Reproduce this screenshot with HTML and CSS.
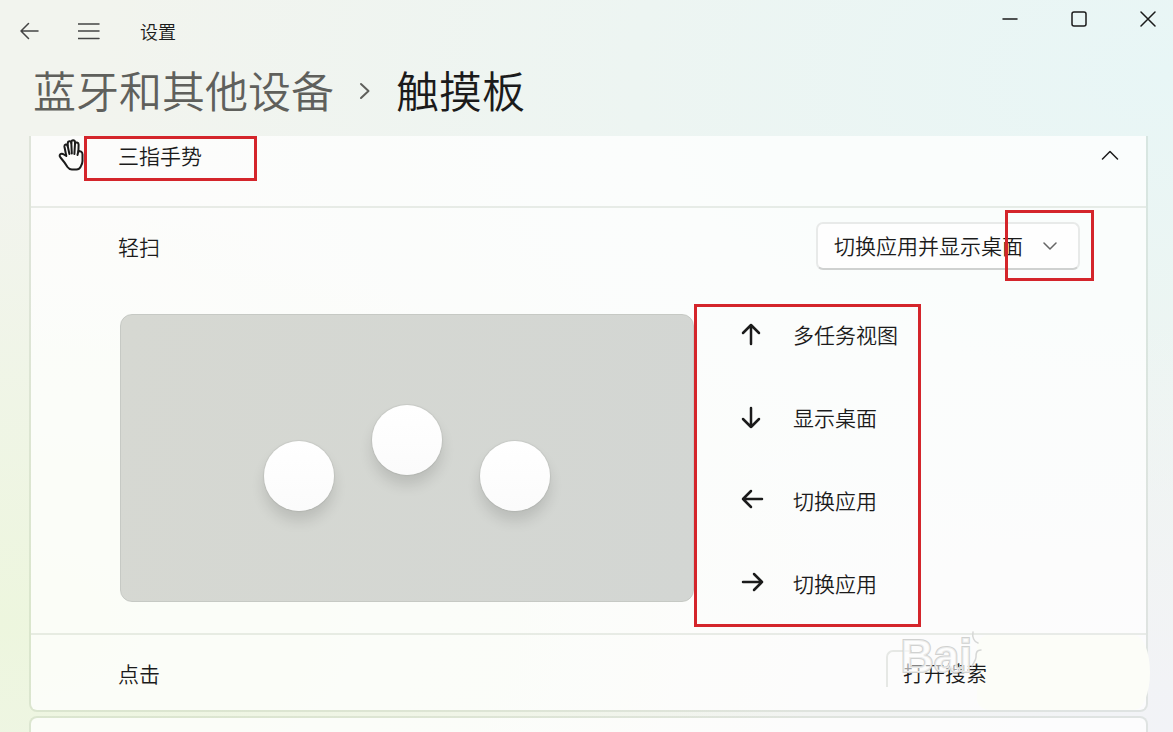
FILE: index.html
```html
<!DOCTYPE html>
<html lang="zh-CN">
  <head>
    <meta charset="UTF-8">
    <meta name="viewport" content="width=device-width, initial-scale=1.0">
    <title>设置</title>
    <link rel="stylesheet" href="styles.css">
  </head>
  <body>
    <header class="titlebar">
      <button class="nav-btn" type="button" aria-label="返回">
        <svg width="20" height="18" viewBox="0 0 20 18"><path d="M18 9H1M8.500 1.500L1 9L8.500 16.500"/></svg>
      </button>
      <button class="nav-btn" type="button" aria-label="菜单">
        <svg width="22" height="18" viewBox="0 0 22 18"><path d="M0 2H21M0 9H21M0 16.500H21"/></svg>
      </button>
      <span class="app-name">设置</span>
      <div class="window-controls">
        <button type="button" aria-label="最小化">
          <svg width="16" height="16" viewBox="0 0 16 16"><path d="M1 8H15"/></svg>
        </button>
        <button type="button" aria-label="最大化">
          <svg width="16" height="16" viewBox="0 0 16 16"><rect x="1" y="1" width="14" height="14" rx="2"/></svg>
        </button>
        <button type="button" aria-label="关闭">
          <svg width="16" height="16" viewBox="0 0 16 16"><path d="M1 1L15 15M15 1L1 15"/></svg>
        </button>
      </div>
    </header>

    <nav class="breadcrumb">
      <a href="#">蓝牙和其他设备</a>
      <svg width="12" height="18" viewBox="0 0 12 18"><path d="M2 2L9.500 9L2 16"/></svg>
      <h1>触摸板</h1>
    </nav>

    <main class="content">
      <section class="card card-open">
        <div class="card-header">
          <svg class="hand" width="27" height="32" viewBox="0 0 27 32">
            <path d="M8.300 17L6.500 8C6 5 9 4.500 9.600 7L9.800 4.500C9.500 1.800 13 1.300 13.300 4V3.300C13.500 0.700 16.800 0.700 17 3.300V5C17.500 2.500 20.800 3 20.600 6L20.400 12.500C22.800 11.500 24.500 13 24.500 15.500V22C24.500 24.500 23.500 26 22.500 28C21.500 30 20.500 30.500 18.500 30.500H14C11.500 30.500 10.500 29.500 9.500 28C8 25.500 5.500 22 2.500 18.500C0.500 16 2.800 14 5 15Z"/>
            <path d="M9.600 6.500L11.400 15M13.300 4L13.800 14.500M17 5L16.400 15M20.400 12L19.500 16"/>
          </svg>
          <span class="card-title">三指手势</span>
          <button class="expander" type="button" aria-label="收起">
            <svg width="18" height="10" viewBox="0 0 18 10"><path d="M1.500 9L9 1.500L16.500 9"/></svg>
          </button>
          <div class="mark mark-title"></div>
        </div>

        <div class="card-body">
          <div class="setting-row">
            <label for="swipe">轻扫</label>
            <div class="select-box">
              <select id="swipe">
                <option>切换应用并显示桌面</option>
              </select>
              <svg width="14" height="8" viewBox="0 0 14 8"><path d="M1 1L7 7L13 1"/></svg>
              <div class="mark mark-select"></div>
            </div>
          </div>

          <div class="gesture">
            <div class="touchpad">
              <div class="fingers">
                <span class="finger"></span>
                <span class="finger finger-mid"></span>
                <span class="finger"></span>
              </div>
            </div>
            <ul class="actions">
              <li>
                <svg width="24" height="24" viewBox="0 0 24 24"><path d="M11 22V3M3 11L11 3L19 11"/></svg>
                <span>多任务视图</span>
              </li>
              <li>
                <svg width="24" height="24" viewBox="0 0 24 24"><path d="M11 3V22M3 14L11 22L19 14"/></svg>
                <span>显示桌面</span>
              </li>
              <li>
                <svg width="24" height="24" viewBox="0 0 24 24"><path d="M22 11H3M11 3L3 11L11 19"/></svg>
                <span>切换应用</span>
              </li>
              <li>
                <svg width="24" height="24" viewBox="0 0 24 24"><path d="M3 11H22M14 3L22 11L14 19"/></svg>
                <span>切换应用</span>
              </li>
            </ul>
          </div>
        </div>

        <div class="tap-row">
          <label for="tap">点击</label>
          <div class="smudge"></div>
          <button class="tap-value" id="tap" type="button">打开搜索</button>
          <span class="watermark">Bai</span>
          <svg class="paw" width="12" height="42" viewBox="0 0 12 42"><path d="M2 1C1 6 3 11 7 12M10 19C5 19 5 23 5 26C5 30 2 32 1 35"/></svg>
        </div>
      </section>
      <section class="card card-next"></section>
    </main>
  </body>
</html>
```

FILE: styles.css
```css
* {
    box-sizing: border-box;
}

html, body {
    height: 100%;
    margin: 0;
}

body {
    display: flex;
    flex-direction: column;
    overflow: hidden;
    font-family: "Noto Sans CJK SC", sans-serif;
    font-size: 21px;
    font-weight: 350;
    line-height: 30px;
    color: #1b1b1b;
    background:
      radial-gradient(ellipse at 0% 85%, #edf6de 0%, rgba(237, 246, 222, 0) 50%),
      radial-gradient(ellipse at 100% 100%, #f2f3f7 0%, rgba(242, 243, 247, 0) 40%),
      radial-gradient(ellipse at 100% 10%, #e8f6f6 0%, rgba(232, 246, 246, 0) 65%),
      #f2f4ee;
}

button {
    padding: 0;
    border: none;
    background: none;
    font: inherit;
    color: inherit;
}

svg {
    display: block;
    flex: none;
    fill: none;
    stroke: #1b1b1b;
    stroke-width: 1.500;
    stroke-linecap: round;
    stroke-linejoin: round;
}

/* 标题栏 */
.titlebar {
    display: flex;
    align-items: center;
    height: 62px;
    flex: none;
}

.nav-btn {
    display: flex;
    align-items: center;
    justify-content: center;
    width: 59px;
    height: 40px;
}

.nav-btn svg {
    stroke: #444;
}

.app-name {
    margin-left: 22px;
    font-size: 18px;
}

.window-controls {
    display: flex;
    align-self: flex-start;
    gap: 19px;
    margin-left: auto;
}

.window-controls button {
    display: flex;
    align-items: center;
    justify-content: center;
    width: 50px;
    height: 37px;
}

/* 面包屑 */
.breadcrumb {
    display: flex;
    align-items: center;
    flex: none;
    height: 74px;
    padding: 0 33px 16px;
    font-size: 43px;
    line-height: 58px;
}

.breadcrumb a {
    padding-bottom: 4px;
    color: #5f605c;
    text-decoration: none;
}

.breadcrumb svg {
    margin: 0 25px;
    stroke: #5f605c;
    stroke-width: 2;
}

.breadcrumb h1 {
    margin: 0;
    padding-bottom: 4px;
    font-size: inherit;
    font-weight: inherit;
}

/* 卡片 */
.content {
    flex: 1;
    min-height: 0;
    padding: 0 25px 0 29px;
    overflow: hidden;
}

.card {
    border: 2px solid rgba(60, 90, 50, 0.1);
    border-radius: 8px;
    background: rgba(255, 255, 255, 0.75);
    background-clip: padding-box;
}

.card-open {
    border-top: none;
    border-top-left-radius: 0;
    border-top-right-radius: 0;
}

.card-next {
    height: 60px;
    margin-top: 4px;
}

.card-header {
    position: relative;
    display: flex;
    align-items: center;
    height: 72px;
    padding: 0 27px 32px;
    border-bottom: 2px solid rgba(60, 90, 50, 0.1);
}

.hand {
    stroke-width: 2;
}

.card-title {
    margin-left: 33px;
}

.expander {
    display: flex;
    align-items: center;
    justify-content: center;
    width: 18px;
    height: 30px;
    margin-left: auto;
}

.card-body {
    padding: 14px 66px 6px 87px;
    border-bottom: 2px solid rgba(60, 90, 50, 0.1);
}

.setting-row {
    display: flex;
    align-items: center;
    justify-content: space-between;
}

.select-box {
    position: relative;
}

.select-box select {
    appearance: none;
    display: block;
    width: 264px;
    height: 48px;
    padding: 0 50px 2px 16px;
    border: 2px solid #e8eae9;
    border-bottom-color: #cfd1d0;
    border-radius: 7px;
    background: #fefefe;
    font: inherit;
    color: inherit;
}

.select-box svg {
    position: absolute;
    top: 20px;
    right: 23px;
    stroke: #666;
    pointer-events: none;
}

/* 红色标注框 */
.mark {
    position: absolute;
    border: 3px solid #d4252b;
    pointer-events: none;
}

.mark-title {
    top: 0;
    left: 53px;
    width: 173px;
    height: 45px;
}

.mark-select {
    top: -12px;
    right: -14px;
    width: 89px;
    height: 71px;
}

/* 手势示意 */
.gesture {
    display: flex;
    align-items: flex-start;
    margin-top: 34px;
}

.touchpad {
    display: flex;
    align-items: center;
    justify-content: center;
    flex: 0 1 574px;
    height: 288px;
    margin: 10px 0 0 2px;
    border: 1px solid #c6c9c4;
    border-radius: 12px;
    background: linear-gradient(100deg, #d6d8d2, #d3d6d3);
}

.fingers {
    display: flex;
    align-items: flex-end;
    gap: 38px;
    height: 106px;
}

.finger {
    width: 70px;
    height: 70px;
    border-radius: 50%;
    background: linear-gradient(#fff, #fbfbfb);
    box-shadow: 0 0 1px 1px rgba(0, 0, 0, 0.06), 0 10px 14px rgba(0, 0, 0, 0.12);
}

.finger-mid {
    align-self: flex-start;
}

.actions {
    display: flex;
    flex-direction: column;
    gap: 53px;
    width: 227px;
    flex: none;
    margin: 0;
    padding: 12px 0 26px 43px;
    border: 3px solid #d4252b;
    list-style: none;
}

.actions li {
    display: flex;
    align-items: center;
    gap: 29px;
}

.actions svg {
    stroke-width: 2.500;
}

/* 点击 */
.tap-row {
    position: relative;
    display: flex;
    align-items: flex-start;
    justify-content: space-between;
    height: 75px;
    padding: 15px 66px 0 87px;
}

.tap-row label {
    padding-top: 8px;
}

.tap-value {
    position: relative;
    width: 194px;
    height: 35px;
    padding: 7px 0 0 17px;
    text-align: left;
}

/* 只画按钮的左上边框 */
.tap-value::before {
    content: "";
    position: absolute;
    top: 0;
    left: 0;
    width: 24px;
    height: 35px;
    border-top: 2px solid #e6e8e5;
    border-left: 2px solid #e6e8e5;
    border-top-left-radius: 7px;
}

.smudge {
    position: absolute;
    top: 0;
    right: -4px;
    width: 173px;
    height: 75px;
    border-radius: 12px 16px 16px 12px / 12px 38px 38px 12px;
    background: #fcfdf8;
}

.watermark {
    position: absolute;
    top: 1px;
    right: 174px;
    font-family: "Liberation Sans", sans-serif;
    font-size: 46px;
    font-weight: bold;
    line-height: 40px;
    color: rgba(255, 255, 255, 0.6);
    -webkit-text-stroke: 2px #d0d1d0;
    paint-order: stroke fill;
    pointer-events: none;
}

.paw {
    position: absolute;
    top: -4px;
    right: 163px;
    stroke: #d6d7d6;
}
```
